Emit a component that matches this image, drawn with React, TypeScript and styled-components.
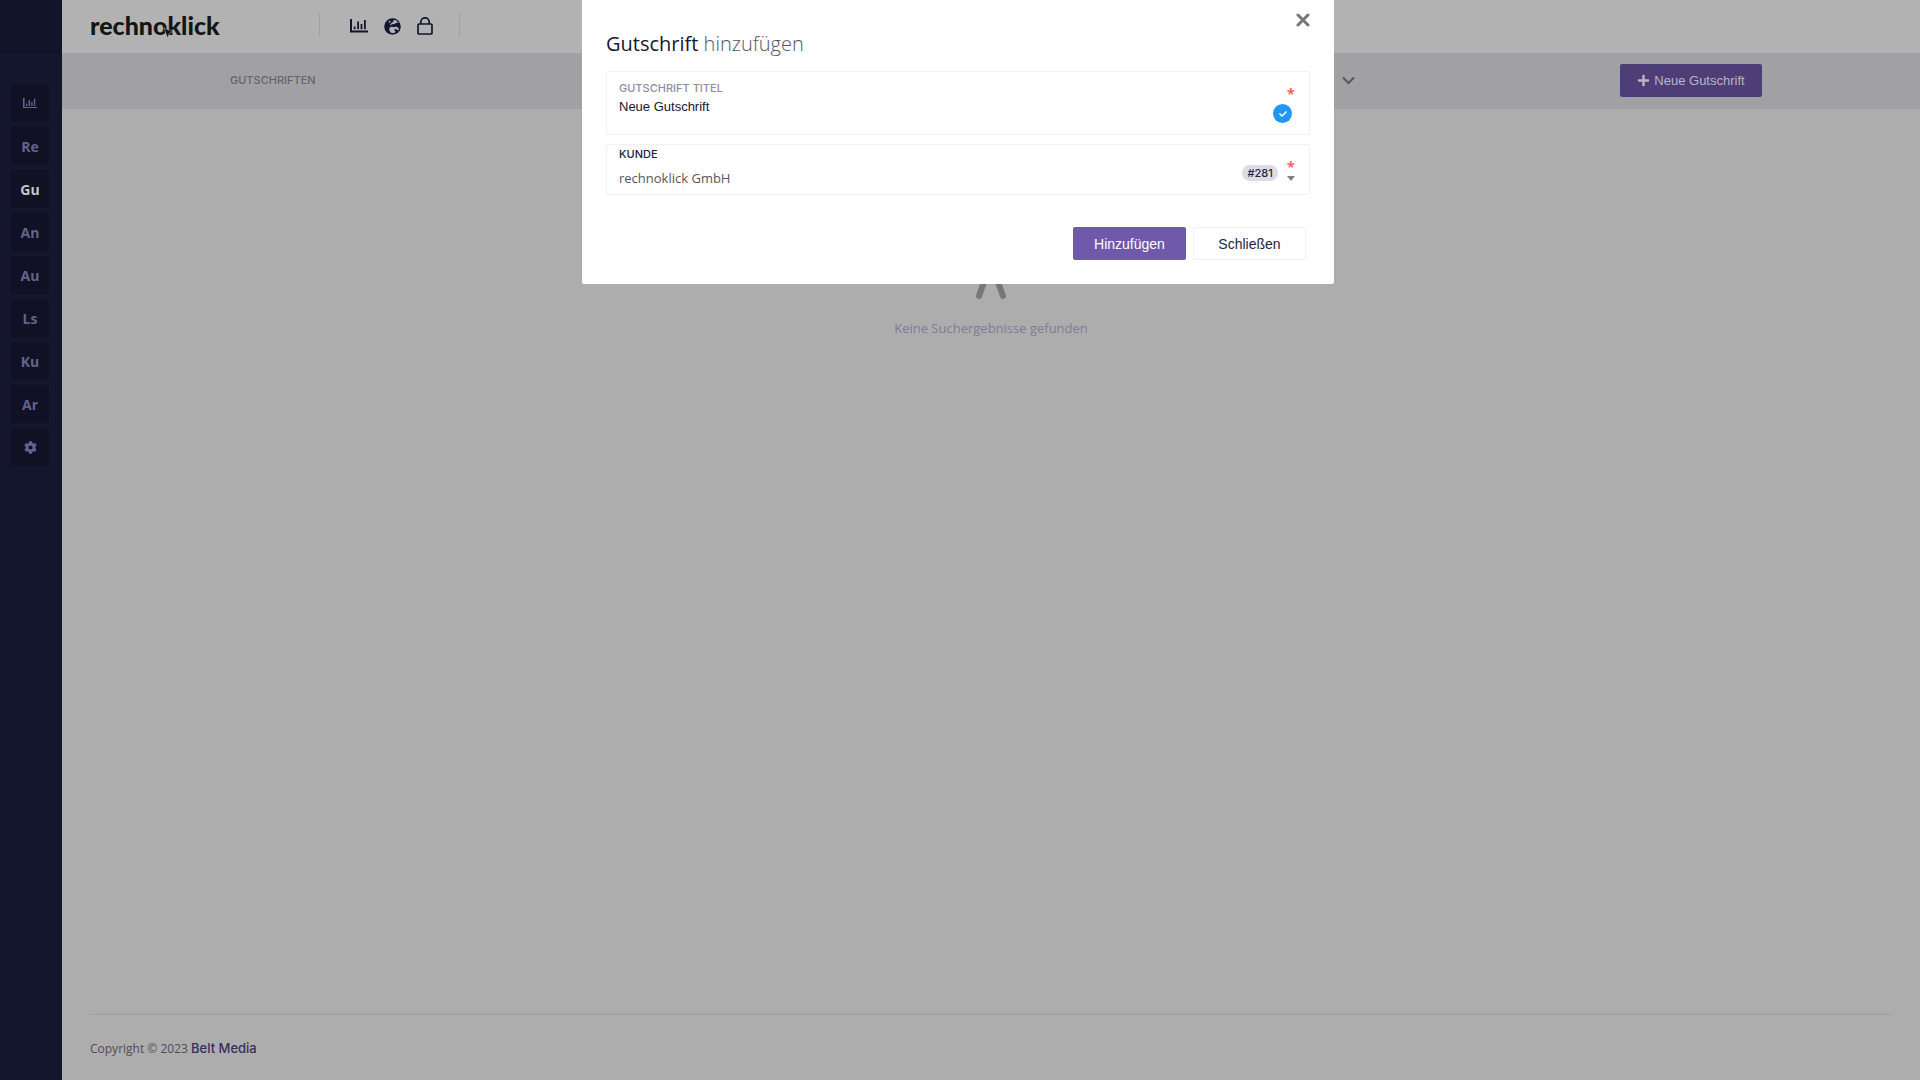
import React from "react";
import styled, { createGlobalStyle, css } from "styled-components";
import { FaCog, FaPlus, FaCheck } from "react-icons/fa";

const uiFont = '"Open Sans", "Noto Sans", sans-serif';
const capsFont = 'Inter, "Open Sans", sans-serif';
const controlFont = '"Liberation Sans", Arial, sans-serif';

const GlobalStyle = createGlobalStyle`
  *, *::before, *::after { box-sizing: border-box; }
  body {
    margin: 0;
    background: #adadad;
    color: #4c4c58;
    font-family: ${uiFont};
    font-size: 13px;
  }
  button, input, select { margin: 0; }
`;

const Shell = styled.div`
  display: flex;
  min-height: 100vh;
`;

const Sidebar = styled.aside`
  flex: 0 0 62px;
  background: #14162e;
`;

const SidebarTop = styled.div`
  height: 53px;
  background: #12142a;
  border-bottom: 1px solid #0e1024;
`;

const SideNav = styled.nav`
  display: flex;
  flex-direction: column;
  align-items: center;
  gap: 5px;
  padding: 31px 2px 0 0;
`;

const SideLink = styled.a<{ $active?: boolean }>`
  display: flex;
  align-items: center;
  justify-content: center;
  width: 38px;
  height: 38px;
  border-radius: 2px;
  background: #101124;
  color: ${(p) => (p.$active ? "#c6c6c8" : "#62648f")};
  font-size: 14px;
  font-weight: 700;
  text-decoration: none;
`;

const Page = styled.div`
  flex: 1;
  min-width: 0;
  display: flex;
  flex-direction: column;
`;

const TopBar = styled.header`
  display: flex;
  align-items: center;
  height: 53px;
  padding: 0 0 4px 28px;
  background: #b2b2b2;
`;

const Logo = styled.a`
  position: relative;
  width: 229px;
  color: #151515;
  font-family: Lato, sans-serif;
  font-size: 25px;
  font-weight: 900;
  line-height: 30px;
  text-decoration: none;
`;

const LogoCursor = styled.svg`
  position: absolute;
  left: 73px;
  top: 17px;
`;

const TopIcons = styled.nav`
  display: flex;
  align-items: center;
  gap: 16px;
  height: 24px;
  padding: 3px 26px 0 30px;
  border: solid #a2a2a5;
  border-width: 0 1px;
`;

const TopIconLink = styled.a`
  display: flex;
  color: #14142f;
`;

const SubHeader = styled.div`
  display: flex;
  align-items: center;
  justify-content: space-between;
  height: 56px;
  padding: 0 158px 2px 168px;
  background: #a1a1a3;
`;

const SubTitle = styled.h1`
  margin: 0;
  color: #656569;
  font-family: ${capsFont};
  font-size: 11px;
  font-weight: 500;
  line-height: 16px;
`;

const SubActions = styled.div`
  display: flex;
  align-items: center;
  gap: 265px;
`;

const IconButton = styled.button`
  display: flex;
  padding: 0;
  border: 0;
  background: none;
  color: #55555f;
`;

const Button = styled.button<{ $kind: "primary" | "plain" | "dimmed" }>`
  display: flex;
  align-items: center;
  justify-content: center;
  gap: 4px;
  height: 33px;
  padding: 0;
  border: 1px solid transparent;
  border-radius: 2px;
  font-family: ${controlFont};
  font-size: 14px;
  ${(p) =>
    p.$kind === "primary" &&
    css`
      width: 113px;
      background: #6e59aa;
      color: #ffffff;
    `}
  ${(p) =>
    p.$kind === "plain" &&
    css`
      width: 113px;
      border-color: #f1f1f4;
      background: #ffffff;
      color: #24243e;
    `}
  ${(p) =>
    p.$kind === "dimmed" &&
    css`
      width: 142px;
      background: #4d3e78;
      color: #b9b6c4;
      font-size: 13px;
    `}
`;

const Content = styled.main`
  flex: 1;
  display: flex;
  flex-direction: column;
  align-items: center;
  padding-top: 136px;
`;

const EmptyText = styled.p`
  margin: 17px 0 0;
  color: #7e7c96;
  font-size: 13px;
  line-height: 24px;
`;

const Footer = styled.footer`
  margin: 0 28px;
  padding: 22px 0 20px;
  border-top: 1px solid #a0a0a4;
  color: #4c4c58;
  font-size: 12px;
  line-height: 22px;
`;

const FooterLink = styled.a`
  color: #352d5c;
  font-family: ${capsFont};
  font-weight: 500;
  font-size: 13px;
  text-decoration: none;
`;

const Overlay = styled.div`
  position: fixed;
  inset: 0 0 auto;
  display: flex;
  justify-content: center;
  padding-right: 4px;
`;

const Dialog = styled.section`
  width: 752px;
  padding: 9px 24px 24px;
  border-radius: 0 0 2px 2px;
  background: #ffffff;
`;

const DialogTop = styled.div`
  display: flex;
  justify-content: flex-end;
  height: 22px;
`;

const DialogTitle = styled.h2`
  margin: 0 0 14px;
  color: #55555f;
  font-size: 20px;
  font-weight: 300;
  line-height: 26px;
`;

const TitleStrong = styled.span`
  color: #16162c;
  font-weight: 400;
`;

const Field = styled.div<{ $tall?: boolean }>`
  display: flex;
  justify-content: space-between;
  height: ${(p) => (p.$tall ? 64 : 51)}px;
  margin-bottom: ${(p) => (p.$tall ? 9 : 10)}px;
  padding: ${(p) => (p.$tall ? "9px 14px 0 12px" : "2px 14px 0 12px")};
  border: 1px solid #f1f1f4;
  border-radius: 2px;
`;

const FieldBody = styled.div`
  flex: 1;
  display: flex;
  flex-direction: column;
`;

const FieldLabel = styled.label<{ $strong?: boolean }>`
  color: ${(p) => (p.$strong ? "#20203c" : "#8d8d9d")};
  font-family: ${capsFont};
  font-size: 11px;
  font-weight: 500;
  line-height: 14px;
`;

const TextInput = styled.input`
  height: 22px;
  padding: 0;
  border: 0;
  outline: 0;
  background: none;
  color: #16162c;
  font-family: ${controlFont};
  font-size: 13px;
`;

const Select = styled.select`
  height: 35px;
  padding: 0;
  border: 0;
  outline: 0;
  appearance: none;
  background: none;
  color: #55555a;
  font-family: ${uiFont};
  font-size: 13px;
`;

const FieldSide = styled.div<{ $top: number }>`
  display: flex;
  flex-direction: column;
  align-items: flex-end;
  gap: 5px;
  padding-top: ${(p) => p.$top}px;
`;

const Required = styled.span`
  height: 12px;
  color: #f4504f;
  font-size: 15px;
  font-weight: 600;
  line-height: 14px;
`;

const CheckBadge = styled.span`
  display: flex;
  align-items: center;
  justify-content: center;
  width: 19px;
  height: 19px;
  margin: 1px 3px 0 0;
  border-radius: 50%;
  background: #2196f3;
  color: #ffffff;
`;

const NumberBadge = styled.span`
  align-self: center;
  margin: 4px 9px 0 0;
  padding: 0 5px;
  border-radius: 8px;
  background: #dcdce4;
  color: #24243e;
  font-family: ${capsFont};
  font-size: 11px;
  font-weight: 500;
  line-height: 16px;
`;

const Caret = styled.span`
  border: solid transparent;
  border-width: 5px 4px 0;
  border-top-color: #808080;
`;

const DialogActions = styled.div`
  display: flex;
  justify-content: flex-end;
  gap: 7px;
  padding: 22px 4px 0 0;
`;

const ChartIcon = ({ size }: { size: number }) => (
  <svg width={size} height={(size * 14) / 18} viewBox="0 0 18 14" fill="currentColor" aria-hidden>
    <path d="M0 0h2v11.6h16v2H0z" />
    <path d="M3.7 7.5h1.8v2.8H3.7zM7.2 2.5H9v7.8H7.2zM10.6 5h1.8v5.3h-1.8zM14 1h1.8v9.3H14z" />
  </svg>
);

const GlobeIcon = () => (
  <svg width="17" height="17" viewBox="0 0 17 17" aria-hidden>
    <circle cx="8.5" cy="8.5" r="8.3" fill="currentColor" />
    <path
      fill="#b2b2b2"
      d="M9.500 2l2.500.2 2.600 2.800-2.400-.3-1.600 1.200-2.600.4-1.800 1.400.2-1.700 1.700-1.400 1.200-.8z"
    />
    <path fill="#b2b2b2" d="M5.800 9.300l2.200-.5 2.200.5 1.600-.9 1.800.8 1.400 1.500-.9 1.700-2.300-1.500-1.700.8 1.600 2.300-2.200 1.200-2.700-.5-1.700-2.700z" />
    <path fill="#b2b2b2" d="M4.400 3.700l1.500-1.100.8.8L5.200 5z" />
  </svg>
);

const LockIcon = () => (
  <svg width="16" height="18" viewBox="0 0 16 18" fill="none" stroke="currentColor" strokeWidth="1.7" aria-hidden>
    <rect x="1" y="7" width="14" height="10" rx="1" />
    <path d="M3.800 7V5a4.200 4.200 0 0 1 8.400 0v2" />
  </svg>
);

const navItems = ["Re", "Gu", "An", "Au", "Ls", "Ku", "Ar"];

export default function App() {
  return (
    <>
      <GlobalStyle />
      <Shell>
        <Sidebar>
          <SidebarTop />
          <SideNav aria-label="Hauptmenü">
            <SideLink href="#statistik" aria-label="Statistik">
              <ChartIcon size={14} />
            </SideLink>
            {navItems.map((item) => (
              <SideLink key={item} href={`#${item}`} $active={item === "Gu"}>
                {item}
              </SideLink>
            ))}
            <SideLink href="#einstellungen" aria-label="Einstellungen">
              <FaCog size={13} />
            </SideLink>
          </SideNav>
        </Sidebar>
        <Page>
          <TopBar>
            <Logo href="#start">
              rechnoklick
              <LogoCursor width="11" height="12" viewBox="0 0 12 13" aria-hidden>
                <path d="M1 1l10 4-4 1.800L5 12z" fill="#151515" stroke="#b2b2b2" strokeWidth="0.6" />
              </LogoCursor>
            </Logo>
            <TopIcons aria-label="Schnellzugriff">
              <TopIconLink href="#auswertung" aria-label="Auswertung">
                <ChartIcon size={18} />
              </TopIconLink>
              <TopIconLink href="#web" aria-label="Web">
                <GlobeIcon />
              </TopIconLink>
              <TopIconLink href="#sperren" aria-label="Sperren">
                <LockIcon />
              </TopIconLink>
            </TopIcons>
          </TopBar>
          <SubHeader>
            <SubTitle>GUTSCHRIFTEN</SubTitle>
            <SubActions>
              <IconButton aria-label="Filter öffnen">
                <svg width="13" height="9" viewBox="0 0 13 9" aria-hidden>
                  <path d="M1 1.500l5.500 5.500L12 1.500" fill="none" stroke="currentColor" strokeWidth="2" />
                </svg>
              </IconButton>
              <Button $kind="dimmed">
                <FaPlus size={13} />
                Neue Gutschrift
              </Button>
            </SubActions>
          </SubHeader>
          <Content>
            <svg width="32" height="54" viewBox="0 0 32 54" aria-hidden>
              <path
                d="M4 51l10-28h4l10 28"
                fill="none"
                stroke="#777777"
                strokeWidth="6"
                strokeLinecap="round"
              />
              <circle cx="16" cy="8" r="6" fill="#777777" />
            </svg>
            <EmptyText>Keine Suchergebnisse gefunden</EmptyText>
          </Content>
          <Footer>
            Copyright © 2023 <FooterLink href="#belt-media">Belt Media</FooterLink>
          </Footer>
        </Page>
      </Shell>
      <Overlay>
        <Dialog role="dialog" aria-labelledby="dialog-title">
          <DialogTop>
            <IconButton aria-label="Dialog schließen">
              <svg width="14" height="22" viewBox="0 0 14 22" aria-hidden>
                <path
                  d="M2 6l10 10M12 6L2 16"
                  stroke="#777777"
                  strokeWidth="3"
                  strokeLinecap="round"
                />
              </svg>
            </IconButton>
          </DialogTop>
          <DialogTitle id="dialog-title">
            <TitleStrong>Gutschrift</TitleStrong> hinzufügen
          </DialogTitle>
          <Field $tall>
            <FieldBody>
              <FieldLabel htmlFor="titel">GUTSCHRIFT TITEL</FieldLabel>
              <TextInput id="titel" defaultValue="Neue Gutschrift" />
            </FieldBody>
            <FieldSide $top={5}>
              <Required>*</Required>
              <CheckBadge>
                <FaCheck size={8} />
              </CheckBadge>
            </FieldSide>
          </Field>
          <Field>
            <FieldBody>
              <FieldLabel htmlFor="kunde" $strong>
                KUNDE
              </FieldLabel>
              <Select id="kunde">
                <option>rechnoklick GmbH</option>
              </Select>
            </FieldBody>
            <NumberBadge>#281</NumberBadge>
            <FieldSide $top={12}>
              <Required>*</Required>
              <Caret />
            </FieldSide>
          </Field>
          <DialogActions>
            <Button $kind="primary">Hinzufügen</Button>
            <Button $kind="plain">Schließen</Button>
          </DialogActions>
        </Dialog>
      </Overlay>
    </>
  );
}
